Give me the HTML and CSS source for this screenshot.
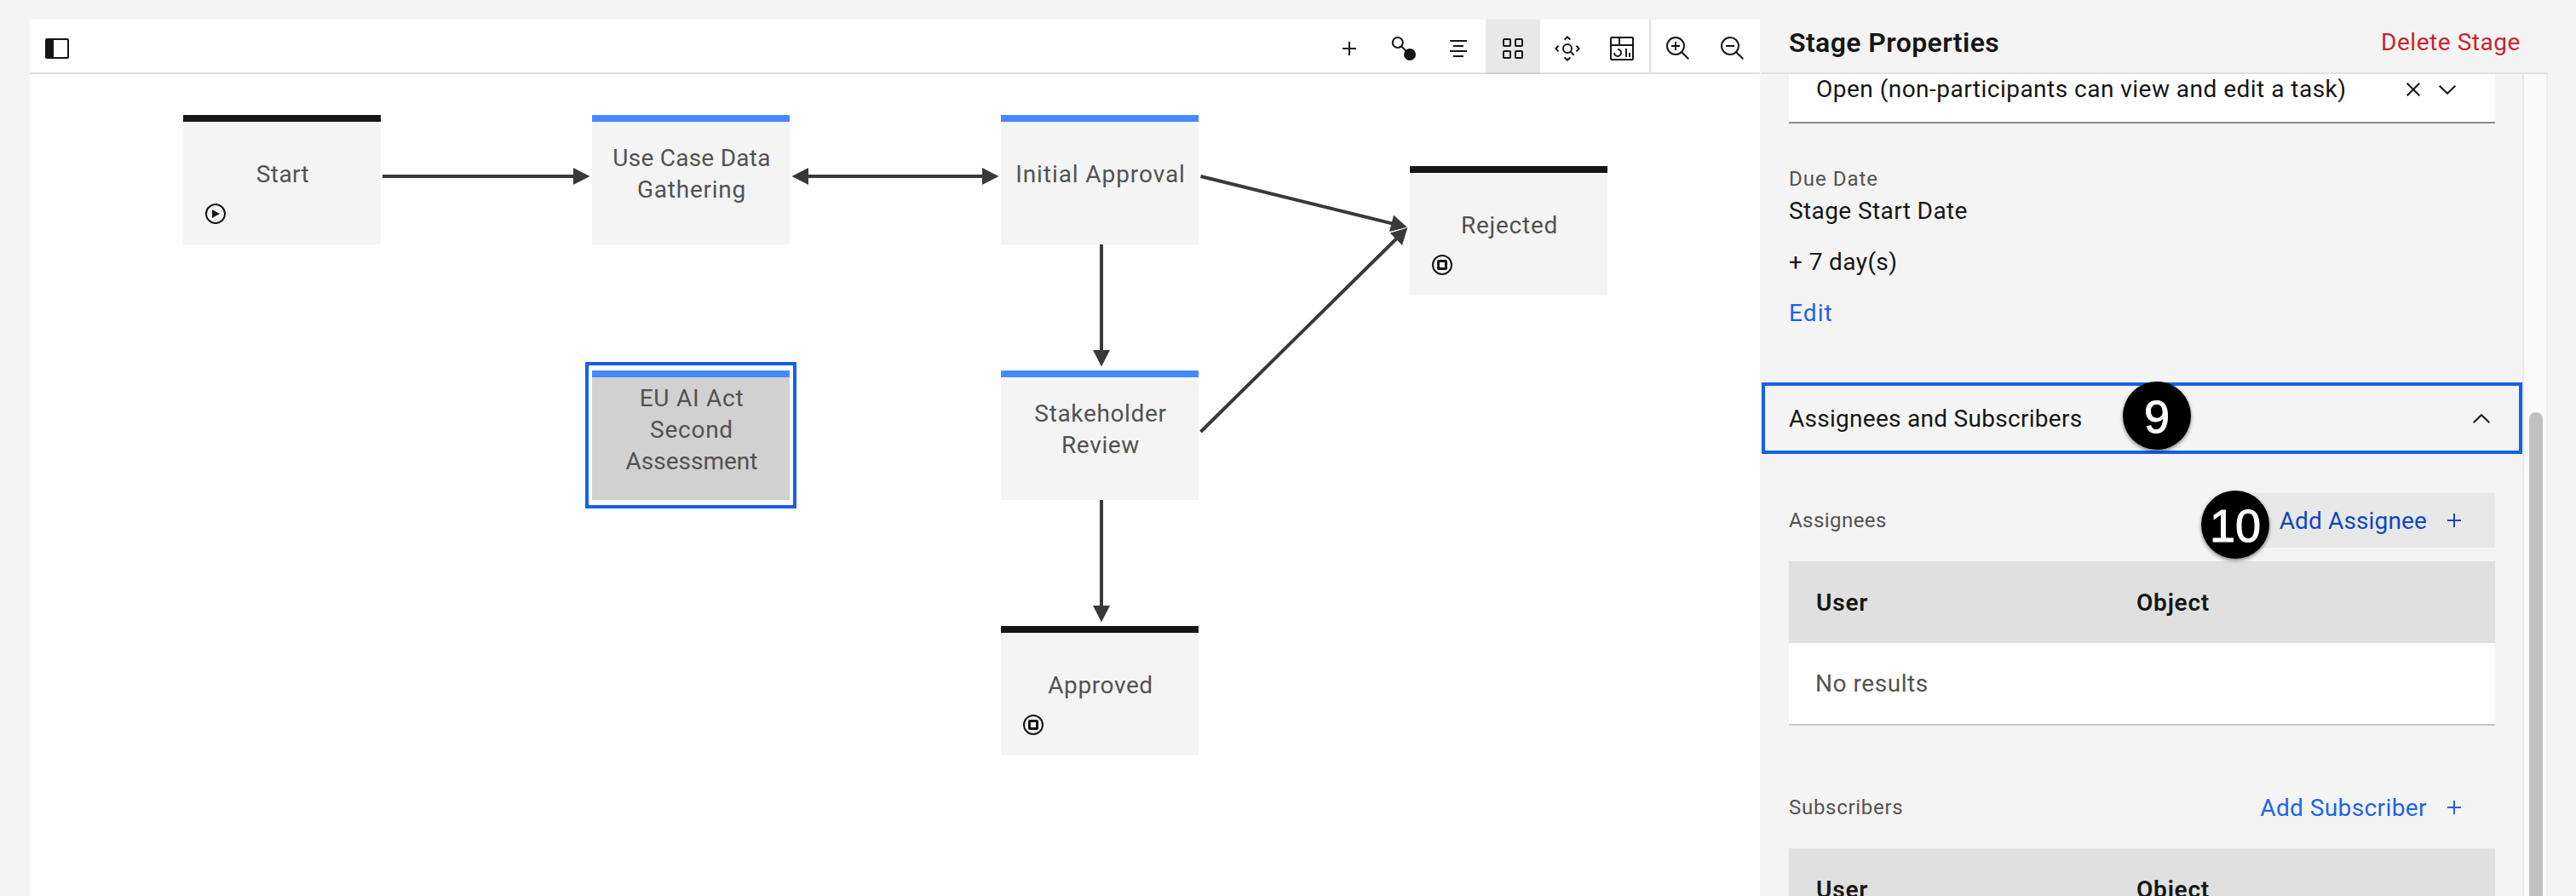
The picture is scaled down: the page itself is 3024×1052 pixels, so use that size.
FILE: index.html
```html
<!DOCTYPE html>
<html lang="en">
<head>
<meta charset="utf-8">
<title>Workflow editor</title>
<link rel="stylesheet" href="styles.css">
</head>
<body>
<div class="app">
  <main class="editor">
    <div class="toolbar">
      <button class="tool" aria-label="Toggle palette"><svg class="icon" viewBox="0 0 32 32"><path d="M28 4H4a2 2 0 0 0-2 2v20a2 2 0 0 0 2 2h24a2 2 0 0 0 2-2V6a2 2 0 0 0-2-2Zm0 22H12V6h16Z"/></svg></button>
      <div class="tool-group">
        <button class="tool" aria-label="Add"><svg class="icon" viewBox="0 0 32 32"><path d="M17 15V8h-2v7H8v2h7v7h2v-7h7v-2Z"/></svg></button>
        <button class="tool" aria-label="Link"><svg class="icon" viewBox="0 0 32 32"><circle class="line" cx="8.8" cy="9" r="6"/><path class="line" d="m13 13.2 6 6"/><circle cx="23" cy="23" r="7"/></svg></button>
        <button class="tool" aria-label="Align"><svg class="icon" viewBox="0 0 32 32"><path d="M6 6h20v2H6zM10 12h12v2H10zM6 18h20v2H6zM10 24h12v2H10z"/></svg></button>
        <button class="tool tool-active" aria-label="Grid"><svg class="icon" viewBox="0 0 32 32"><g class="line"><rect x="5" y="5" width="8" height="8" rx="1"/><rect x="19" y="5" width="8" height="8" rx="1"/><rect x="5" y="19" width="8" height="8" rx="1"/><rect x="19" y="19" width="8" height="8" rx="1"/></g></svg></button>
        <button class="tool" aria-label="Fit to view"><svg class="icon" viewBox="0 0 32 32"><g class="line"><circle cx="16" cy="16" r="5"/><path d="m19.5 19.5 4.2 4.2M12.6 5.4 16 2.4l3.4 3M12.6 26.6l3.4 3 3.4-3M5.4 12.6l-3 3.4 3 3.4M26.6 12.6l3 3.4-3 3.4"/></g></svg></button>
        <button class="tool" aria-label="Dashboard"><svg class="icon" viewBox="0 0 32 32"><path d="M24 21h2v5h-2zM20 16h2v10h-2zM11 26a5 5 0 0 1-5-5h2a3 3 0 1 0 3-3v-2a5 5 0 0 1 0 10Z"/><path d="M28 2H4a2 2 0 0 0-2 2v24a2 2 0 0 0 2 2h24a2 2 0 0 0 2-2V4a2 2 0 0 0-2-2Zm0 9H14V4h14ZM12 4v7H4V4ZM4 28V13h24v15Z"/></svg></button>
      </div>
      <div class="tool-group zoom-group">
        <button class="tool" aria-label="Zoom in"><svg class="icon" viewBox="0 0 32 32"><path d="M18 12h-4V8h-2v4H8v2h4v4h2v-4h4z"/><path d="M21.45 20A10.86 10.86 0 0 0 24 13a11 11 0 1 0-11 11 10.86 10.86 0 0 0 7-2.55L27.59 29 29 27.59ZM13 22a9 9 0 1 1 9-9 9 9 0 0 1-9 9Z"/></svg></button>
        <button class="tool" aria-label="Zoom out"><svg class="icon" viewBox="0 0 32 32"><path d="M8 12h10v2H8z"/><path d="M21.45 20A10.86 10.86 0 0 0 24 13a11 11 0 1 0-11 11 10.86 10.86 0 0 0 7-2.55L27.59 29 29 27.59ZM13 22a9 9 0 1 1 9-9 9 9 0 0 1-9 9Z"/></svg></button>
      </div>
    </div>
    <div class="canvas">
      <svg class="links" viewBox="35 87 2031 965">
        <g class="link-lines">
          <path d="M449 207H675M946 207H1156M1293 287V413M1293 587V713M1409.5 207 1635 262.6M1409.5 507 1640 279.5"/>
        </g>
        <g class="link-heads">
          <path d="M692.5 207 673 197v20zM929.5 207l19.500-10v20zM1172.500 207 1153 197v20zM1293 430.500l-10-19.500h20zM1293 730.500l-10-19.500h20z"/>
          <path d="M1652.500 267.300 1636 252.600 1631 272z"/>
          <path d="M1652.500 267 1631.800 273.600 1646 288z"/>
        </g>
        <path class="link-gap" d="m1631 273 21-6"/>
      </svg>
      <div class="node node-start terminal"><span class="label">Start</span><svg class="state" viewBox="0 0 24 24"><circle class="line" cx="12" cy="12" r="11"/><path d="m8 7 9 5-9 5z"/></svg></div>
      <div class="node node-gathering"><span class="label"><span class="snug">Use Case Data</span><span>Gathering</span></span></div>
      <div class="node node-initial"><span class="label">Initial Approval</span></div>
      <div class="node node-rejected terminal"><span class="label">Rejected</span><svg class="state" viewBox="0 0 24 24"><circle class="line" cx="12" cy="12" r="11"/><rect class="stop" x="7.500" y="7.500" width="9" height="9" rx=".5"/></svg></div>
      <div class="node node-assessment selected"><span class="label"><span>EU AI Act</span><span>Second</span><span class="tight">Assessment</span></span></div>
      <div class="node node-review"><span class="label"><span>Stakeholder</span><span>Review</span></span></div>
      <div class="node node-approved terminal"><span class="label">Approved</span><svg class="state" viewBox="0 0 24 24"><circle class="line" cx="12" cy="12" r="11"/><rect class="stop" x="7.500" y="7.500" width="9" height="9" rx=".5"/></svg></div>
    </div>
  </main>

  <aside class="panel">
    <header class="panel-header">
      <h2 class="panel-title">Stage Properties</h2>
      <a class="delete">Delete Stage</a>
    </header>
    <div class="panel-scroll">
      <div class="panel-body">
        <div class="select">
          <span class="select-value">Open (non-participants can view and edit a task)</span>
          <svg class="clear" viewBox="0 0 16 16"><path class="line" d="m.7.700 14.600 14.600M15.300.700.700 15.300"/></svg>
          <svg class="chevron" viewBox="0 0 20 11"><path class="line" d="m.7.800 9.300 9 9.300-9"/></svg>
        </div>
        <section class="due">
          <h3 class="field-label due-label">Due Date</h3>
          <p class="due-line">Stage Start Date</p>
          <p class="due-line">+ 7 day(s)</p>
          <p class="due-line"><a class="edit">Edit</a></p>
        </section>
        <div class="accordion">
          <span class="accordion-title">Assignees and Subscribers</span>
          <svg class="chevron" viewBox="0 0 20 11"><path class="line" d="m.7 10.200 9.300-9 9.300 9"/></svg>
          <span class="badge badge-accordion">9</span>
        </div>
        <section class="list">
          <div class="list-head">
            <h3 class="field-label">Assignees</h3>
            <button class="add add-hover"><span>Add Assignee</span><svg class="plus" viewBox="0 0 16 16"><path d="M7 0h2v7h7v2H9v7H7V9H0V7h7z"/></svg></button>
            <span class="badge badge-add">10</span>
          </div>
          <div class="table">
            <div class="table-head"><span>User</span><span>Object</span></div>
            <div class="table-row">No results</div>
          </div>
        </section>
        <section class="list list-subscribers">
          <div class="list-head">
            <h3 class="field-label wide">Subscribers</h3>
            <button class="add add-subscriber"><span>Add Subscriber</span><svg class="plus" viewBox="0 0 16 16"><path d="M7 0h2v7h7v2H9v7H7V9H0V7h7z"/></svg></button>
          </div>
          <div class="table">
            <div class="table-head"><span>User</span><span>Object</span></div>
          </div>
        </section>
      </div>
      <div class="scrollbar"><div class="thumb"></div></div>
    </div>
  </aside>
</div>
</body>
</html>
```
FILE: styles.css
```css
* { box-sizing: border-box; }

body {
  margin: 0;
  background: #f4f4f4;
  color: #161616;
  font-family: Roboto, "Liberation Sans", sans-serif;
  font-size: 28px;
}

h2, h3, p { margin: 0; font-weight: 400; }

button {
  border: 0;
  padding: 0;
  background: none;
  color: inherit;
  font: inherit;
}

svg { display: block; fill: #161616; }
.line { fill: none; stroke: #161616; stroke-width: 2; }

.app {
  display: flex;
  gap: 2px;
  height: 1052px;
  padding: 23px 33px 0 35px;
  overflow: hidden;
}

/* Editor */
.editor {
  display: flex;
  flex-direction: column;
  width: 2031px;
  background: #fff;
}

.toolbar {
  display: flex;
  height: 64px;
  border-bottom: 2px solid #e0e0e0;
}

.tool-group { display: flex; }
.tool-group:nth-child(2) { margin-left: auto; }
.zoom-group { border-left: 2px solid #e0e0e0; }

.tool {
  display: flex;
  justify-content: center;
  width: 64px;
  height: 62px;
  padding-top: 18px;
}

.tool-active {
  height: 64px;
  background: #e8e8e8;
  border-bottom: 2px solid #d0d0d0;
}

.icon { width: 32px; height: 32px; }

.canvas { position: relative; flex: 1; }

.links { width: 2031px; height: 965px; }
.link-lines { fill: none; stroke: #393939; stroke-width: 4; }
.link-heads { fill: #393939; }
.link-gap { stroke: #fff; stroke-width: 1; }

.node {
  position: absolute;
  width: 232px;
  height: 152px;
  border-top: 8px solid #4589ff;
  background: #f4f4f4;
  color: #525252;
  letter-spacing: .75px;
}

.terminal { border-top-color: #161616; }

.label {
  display: flex;
  flex-direction: column;
  align-items: center;
  justify-content: center;
  height: 122px;
  padding-left: 2px;
  line-height: 37px;
  white-space: nowrap;
}

.snug { letter-spacing: .25px; }
.tight { letter-spacing: 0; }

.state {
  position: absolute;
  left: 26px;
  top: 96px;
  width: 24px;
  height: 24px;
}

.stop { fill: none; stroke: #161616; stroke-width: 3; }

.node-start { left: 180px; top: 48px; letter-spacing: .4px; }
.node-gathering { left: 660px; top: 48px; }
.node-initial { left: 1140px; top: 48px; letter-spacing: .92px; }
.node-rejected { left: 1620px; top: 108px; }
.node-assessment { left: 660px; top: 348px; }
.node-review { left: 1140px; top: 348px; letter-spacing: .65px; }
.node-approved { left: 1140px; top: 648px; letter-spacing: .6px; }

.selected { background: #d1d1d1; }
.selected::before {
  content: "";
  position: absolute;
  inset: -18px -8px -10px;
  border: 4px solid #1461e8;
}

/* Properties panel */
.panel {
  display: flex;
  flex-direction: column;
  width: 923px;
  flex: none;
}

.panel-header {
  display: flex;
  align-items: center;
  justify-content: space-between;
  height: 64px;
  padding: 0 32px 9px;
  border-bottom: 2px solid #e0e0e0;
}

.panel-title { font-size: 32px; font-weight: 600; letter-spacing: .4px; }
.delete { color: #c7252e; letter-spacing: .55px; }

.panel-scroll { display: flex; flex: 1; min-height: 0; }
.panel-body { width: 893px; overflow: hidden; }

.select {
  display: flex;
  align-items: flex-start;
  height: 58px;
  margin: 0 32px;
  padding: 0 46px 0 32px;
  border-bottom: 2px solid #8d8d8d;
  background: #fff;
  line-height: 35px;
  letter-spacing: .48px;
  white-space: nowrap;
}

.clear { width: 16px; height: 16px; margin: 10px 22px 0 auto; }
.chevron { width: 20px; height: 11px; }
.select .chevron { margin-top: 13px; }

.due { padding: 49px 32px 43px; }
.due-line { margin-bottom: 17px; line-height: 43px; letter-spacing: .4px; }
.edit { color: #1f64e8; letter-spacing: 1.1px; }

.field-label {
  color: #525252;
  font-size: 24px;
  line-height: 32px;
  letter-spacing: .45px;
}
.due-label { letter-spacing: 1px; }
.wide { letter-spacing: .7px; }

.accordion {
  position: relative;
  display: flex;
  align-items: center;
  justify-content: space-between;
  height: 84px;
  padding: 0 34px 0 28px;
  border: 4px solid #1461e8;
  letter-spacing: .28px;
}

.badge {
  position: absolute;
  width: 80px;
  height: 80px;
  border-radius: 50%;
  background: #000;
  box-shadow: 0 2px 4px rgba(0, 0, 0, .5);
  color: #fff;
  font: 54px/82px "Liberation Sans", Arial, sans-serif;
  letter-spacing: 0;
  text-align: center;
  -webkit-text-stroke: 1px #fff;
}
.badge-accordion { left: 420px; top: -5px; }
.badge-add { right: 265px; top: -3px; }

.list { padding: 46px 32px 0; }
.list-subscribers { padding-top: 64px; }

.list-head {
  position: relative;
  display: flex;
  align-items: center;
  justify-content: space-between;
  height: 64px;
  margin-bottom: 16px;
}

.add {
  display: flex;
  align-items: center;
  gap: 24px;
  height: 64px;
  padding: 0 40px 0 32px;
  color: #1f64e8;
  letter-spacing: .41px;
}
.plus { width: 16px; height: 16px; fill: #1f64e8; }
.add-hover { background: #e8e8e8; color: #0f47c4; letter-spacing: .14px; }
.add-hover .plus { fill: #0f47c4; }

.table-head {
  display: grid;
  grid-template-columns: 376px 1fr;
  align-items: center;
  height: 96px;
  padding-left: 32px;
  background: #e0e0e0;
  font-weight: 600;
  letter-spacing: .8px;
}

.table-row {
  height: 97px;
  padding-left: 31px;
  border-bottom: 2px solid #c6c6c6;
  background: #fff;
  color: #525252;
  line-height: 95px;
  letter-spacing: .55px;
}

.scrollbar {
  width: 30px;
  padding: 397px 0 0 6px;
  border-left: 2px solid #e8e8e8;
  border-right: 2px solid #ededed;
  background: #fafafa;
}
.thumb {
  width: 16px;
  height: 600px;
  border-radius: 8px;
  background: #c1c1c1;
}
```
